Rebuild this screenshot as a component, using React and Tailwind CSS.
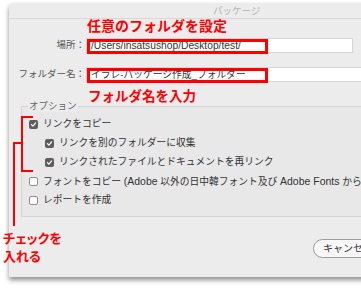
import React from "react";

function Box({ checked }) {
  if (checked) {
    return (
      <span className="w-[9px] h-[9px] rounded-[2px] bg-[#5e5e5e] flex items-center justify-center shrink-0">
        <svg viewBox="0 0 10 10" className="w-[7px] h-[7px]">
          <path d="M2 5.2 L4.2 7.3 L8 2.8" fill="none" stroke="#fff" strokeWidth="1.8" strokeLinecap="round" strokeLinejoin="round" />
        </svg>
      </span>
    );
  }
  return <span className="w-[9px] h-[9px] rounded-[2px] bg-white border border-[#8e8e8e] shrink-0" />;
}

function Option({ checked, indent, children }) {
  return (
    <div className={`h-[19px] flex items-center gap-[5px] whitespace-nowrap ${indent ? "pl-[23px]" : "pl-[7px]"}`}>
      <Box checked={checked} />
      <span>{children}</span>
    </div>
  );
}

export default function App() {
  return (
    <div className="relative w-[361px] h-[289px] overflow-hidden bg-white font-['Liberation_Sans','Noto_Sans_CJK_JP',sans-serif]">
      <div className="ml-[9px] mt-[3px] w-[420px] h-[274px] bg-[#ececec] rounded-tl-[4px] shadow-[0_3px_5px_rgba(0,0,0,0.45)] flex flex-col">
        <div className="h-[16px] border-b border-[#d8d8d8] pl-[204px] text-[9.5px] leading-[15px] text-[#b4b4b4]">パッケージ</div>

        <div className="h-[15px] pl-[78px] text-[14px] leading-[15px] font-bold text-[#ff0000]">任意のフォルダを設定</div>

        <div className="mt-[4px] flex items-center text-[9.5px] text-[#555]">
          <span className="w-[76px] text-right">場所：</span>
          <div className="relative ml-[1px] w-[267px] h-[15px] bg-white border border-[#d6d6d6] pl-[4px] text-[10.25px] leading-[13px] text-[#333]">
            /Users/insatsushop/Desktop/test/
            <div className="absolute left-0 top-0 w-[181px] h-[15px] border-[3px] border-[#ff0000]" />
          </div>
        </div>

        <div className="mt-[14px] flex items-center text-[9.5px] text-[#555]">
          <span className="w-[76px] text-right">フォルダー名：</span>
          <div className="relative ml-[1px] w-[320px] h-[15px] bg-white border border-[#d6d6d6] pl-[4px] text-[9.75px] leading-[13px] text-[#333]">
            イラレ-パッケージ作成_フォルダー
            <div className="absolute left-0 top-0 w-[181px] h-[15px] border-[3px] border-[#ff0000]" />
          </div>
        </div>

        <div className="mt-[7px] h-[15px] pl-[79px] text-[13.5px] leading-[15px] font-bold text-[#ff0000]">フォルダ名を入力</div>

        <div className="relative mt-[2px] ml-[12px] border border-[#d4d4d4] bg-[#e8e8e8] pt-[8px] pb-[6px] text-[9.75px] text-[#333]">
          <span className="absolute left-[6px] -top-[7px] bg-[#ececec] px-[1px] text-[9.5px] leading-[12px] text-[#666]">オプション</span>
          <Option checked>リンクをコピー</Option>
          <Option checked indent>リンクを別のフォルダーに収集</Option>
          <Option checked indent>リンクされたファイルとドキュメントを再リンク</Option>
          <Option>フォントをコピー <span className="text-[10.5px]">(Adobe</span> 以外の日中韓フォント及び <span className="text-[10.5px]">Adobe Fonts</span> からのフォントを除く)</Option>
          <Option>レポートを作成</Option>
        </div>

        <div className="mt-[18px] pl-[304px]">
          <button className="h-[19px] w-[80px] rounded-full border border-[#9c9c9c] bg-[#f7f7f7] pl-[9px] text-left text-[10px] text-[#333]">キャンセル</button>
        </div>
      </div>

      <div className="absolute left-[21px] top-[116px] w-[12px] h-[56px] border-y-[2px] border-l-[2px] border-[#ff0000]" />
      <div className="absolute left-[13px] top-[142px] w-[9px] h-[84px] border-t-[2px] border-l-[2px] border-[#ff0000]" />
      <div className="absolute left-[3px] top-[230px] text-[13px] leading-[18px] font-bold text-[#ff0000] [font-feature-settings:'palt']">
        <div>チェックを</div>
        <div>入れる</div>
      </div>
    </div>
  );
}
